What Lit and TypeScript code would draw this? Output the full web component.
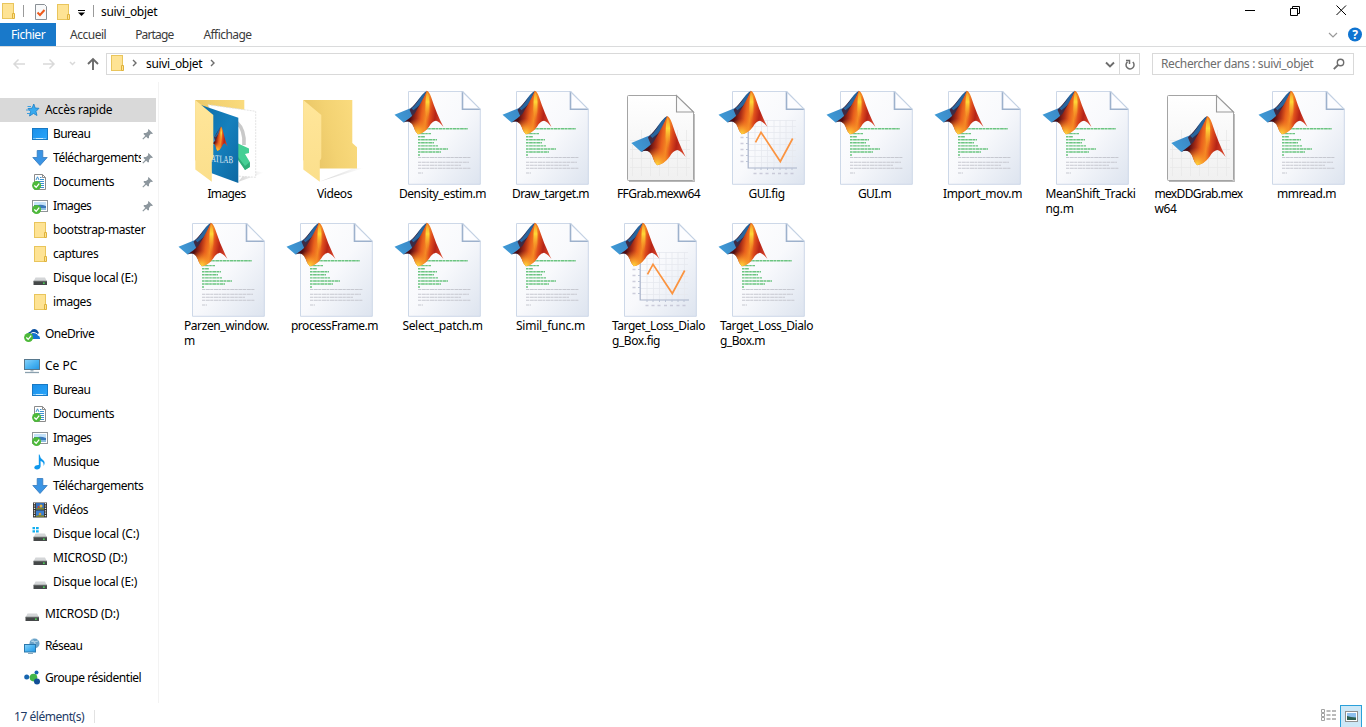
import { LitElement, html, svg, css, nothing } from "lit";
import { customElement, property } from "lit/decorators.js";

/** Single line of text, tracked so that it fills a given width. */
@customElement("fit-label")
export class FitLabel extends LitElement {
  @property() text = "";
  @property({ type: Number }) w = 0;
  static styles = css`
    :host { display: block; white-space: pre; }
    span { display: inline-block; }
  `;
  firstUpdated() {
    const s = this.renderRoot.querySelector("span") as HTMLElement;
    const natural = s.getBoundingClientRect().width;
    if (this.w && natural) s.style.letterSpacing = (this.w + 0.2 - natural) / this.text.length + "px";
  }
  render() {
    return html`<span>${this.text}</span>`;
  }
}

const gradients = html`<svg class="defs" width="0" height="0"><defs>
  <linearGradient id="face" x1="8" y1="20" x2="48" y2="26" gradientUnits="userSpaceOnUse">
    <stop offset="0" stop-color="#3a1020"/><stop offset=".22" stop-color="#4e0d12"/><stop offset=".36" stop-color="#a82c16"/>
    <stop offset=".48" stop-color="#e85f1c"/><stop offset=".6" stop-color="#f58a24"/><stop offset=".7" stop-color="#dd4a1c"/>
    <stop offset=".82" stop-color="#b62417"/><stop offset="1" stop-color="#d8452a"/>
  </linearGradient>
  <linearGradient id="wing" x1="0" y1="24" x2="32" y2="4" gradientUnits="userSpaceOnUse">
    <stop offset="0" stop-color="#3f9ad6"/><stop offset=".5" stop-color="#3a86c4"/><stop offset="1" stop-color="#1e4f86"/>
  </linearGradient>
  <radialGradient id="glow" cx="23" cy="43" r="15" gradientUnits="userSpaceOnUse">
    <stop offset="0" stop-color="#ffd83c"/><stop offset=".45" stop-color="#f9982a" stop-opacity=".85"/><stop offset="1" stop-color="#f07a20" stop-opacity="0"/>
  </radialGradient>
  <linearGradient id="ridge" x1="0" y1="1" x2="0" y2="30" gradientUnits="userSpaceOnUse">
    <stop offset="0" stop-color="#f39a2a"/><stop offset=".35" stop-color="#ffd838"/><stop offset="1" stop-color="#f58a24" stop-opacity="0"/>
  </linearGradient>
  <linearGradient id="page" x1="0" y1="0" x2="1" y2="1">
    <stop offset="0" stop-color="#fff"/><stop offset=".5" stop-color="#f8f9fc"/><stop offset="1" stop-color="#dde4ef"/>
  </linearGradient>
  <linearGradient id="pageGray" x1="0" y1="0" x2="0" y2="1">
    <stop offset="0" stop-color="#fff"/><stop offset="1" stop-color="#f0f0f0"/>
  </linearGradient>
  <linearGradient id="foldBack" x1="0" y1="0.6" x2="1" y2="0.3">
    <stop offset="0" stop-color="#e6c263"/><stop offset=".5" stop-color="#f3d272"/><stop offset="1" stop-color="#fadb7e"/>
  </linearGradient>
  <linearGradient id="foldFront" x1="0" y1="0" x2="0" y2="1">
    <stop offset="0" stop-color="#ffe69a"/><stop offset="1" stop-color="#fbdf8c"/>
  </linearGradient>
  <linearGradient id="cover" x1="0" y1="0" x2="1" y2="1">
    <stop offset="0" stop-color="#0b6ea9"/><stop offset=".5" stop-color="#1580bd"/><stop offset="1" stop-color="#0d68a2"/>
  </linearGradient>
  <linearGradient id="blueScreen" x1="0" y1="0" x2="1" y2="1">
    <stop offset="0" stop-color="#1b8fe8"/><stop offset="1" stop-color="#28a5fb"/>
  </linearGradient>
  <linearGradient id="pcScreen" x1="0" y1="0" x2="1" y2="1">
    <stop offset="0" stop-color="#8bd3fa"/><stop offset=".5" stop-color="#4db5f2"/><stop offset="1" stop-color="#2296e4"/>
  </linearGradient>
  <linearGradient id="shade" x1="0" y1="0" x2="1" y2="0">
    <stop offset="0" stop-color="#888" stop-opacity=".35"/><stop offset="1" stop-color="#888" stop-opacity="0"/>
  </linearGradient>
</defs></svg>`;

const membrane = (t: string) => svg`<g transform=${t}>
  <path d="M0 24L13.500 18.400Q18.500 17 22 11.500Q28 2.500 32.300 0L30 18L18 32Q13.500 29.500 9 31.800Z" fill="url(#wing)"/>
  <path d="M15 19Q19 15 24 9L30 4L26 20L18 26Z" fill="#3e1424" opacity=".8"/>
  <path d="M17 17.500Q20 15.500 23 11Q27 5 31 1.200L28 11Q24 16 19 19.500Z" fill="#28659e"/>
  <path d="M32.300 0Q34.500 .500 36.500 6Q42 23 49 36.300Q45 31 41.500 30Q37.500 30.500 34.500 36Q29.500 42.500 23.300 43.500Q20.500 41 19.300 36.500Q18 32.500 14.500 31Q12 30 9 31.800Q15 28 20 23Q28 10 32.300 0Z" fill="url(#face)"/>
  <path d="M32.300 0Q34.500 .500 36.500 6Q42 23 49 36.300Q45 31 41.500 30Q37.500 30.500 34.500 36Q29.500 42.500 23.300 43.500Q20.500 41 19.300 36.500Q18 32.500 14.500 31Q12 30 9 31.800Q15 28 20 23Q28 10 32.300 0Z" fill="url(#glow)"/>
  <path d="M32.500 1Q34.500 3 35 11Q35.500 21 33.500 30Q30 24 31 14Q31 6 32.500 1Z" fill="url(#ridge)"/>
</g>`;

const page = svg`<path d="M14.500 1.500H68L86.300 19.500V94.300H14.500Z" fill="url(#page)" stroke="#cdd8e8"/>
  <path d="M68.500 1.500V19.800H86.500Z" fill="#fdfdff"/>
  <path d="M68.500 1.500V19.300H86.300" fill="none" stroke="#9db1cc" stroke-width="1.600"/>
  <path d="M68.500 1.500L86.300 19.300" stroke="#c3d1e3" stroke-width="1.200"/>`;

const greens: number[][] = [[27, 74, 38.8], [24, 37, 43.6], [24, 31, 46.7], [24, 43, 49.7], [24, 40, 52.7], [24, 44, 55.9], [24, 54, 59], [24, 47, 62], [24, 26, 65]];
const grays: number[][] = [[24, 77, 67.5], [24, 75, 72.3], [24, 67, 75.3], [24, 77, 78.3], [24, 29, 83]];

const scriptIcon = svg`${page}
  ${greens.map(([a, b, y]) => svg`<path d="M${a} ${y}H${b}" stroke="#6cc581" stroke-width="1.400" stroke-dasharray="2.600 .5 3.700 .4"/>`)}
  ${grays.map(([a, b, y]) => svg`<path d="M${a} ${y}H${b}" stroke="#c6c8d0" stroke-width="1.100" stroke-dasharray="3 .6 4.200 .4"/>`)}
  ${membrane("translate(.5 .8)")}`;

const figIcon = svg`${page}
  <path d="M37 34V78M43.500 30V78M49.500 30V78M56 30V78M62 30V78M68 30V78M74.500 30V78M30 30.500H78M30 36.500H78M30 42.500H78M30 48.500H78M30 54.500H78M30 60.500H78M30 66.500H78M30 72.500H78" stroke="#e6e9ef" stroke-width=".8"/>
  <path d="M30.200 38V78H79" fill="none" stroke="#a9b3ca" stroke-width="1.200"/>
  <path d="M28 47.500h2M28 53.500h2M28 59.500h2M28 65.500h2M28 71.500h2M37 78v2M43 78v2M49.500 78v2M55.500 78v2M62 78v2M68 78v2M74 78v2" stroke="#b7bfd2" stroke-width=".9"/>
  <path d="M22.500 47.500h3M22.500 53.500h3M22.500 59.500h3M22.500 65.500h3M22.500 71.500h3M35.500 83.500h3M41.500 83.500h3M47.500 83.500h3M54 83.500h3M60 83.500h3M66.500 83.500h3M72.500 83.500h3" stroke="#c2c2d3" stroke-width="1.700" opacity=".8"/>
  <path d="M37.500 52.300L43 42.300L62.300 71.500L74.700 48.500" fill="none" stroke="#fb9440" stroke-width="1.700"/>
  ${membrane("translate(.5 .8)")}`;

const mexIcon = svg`<path d="M19 91.300H84.300V24" fill="none" stroke="#999" stroke-width="1.200" opacity=".7"/>
  <path d="M18.500 5.500H66.500L83.500 22V89.500Q83.500 90.500 82.500 90.500H18.500Q17.500 90.500 17.500 89.500V6.500Q17.500 5.500 18.500 5.500Z" fill="url(#pageGray)" stroke="#a4a4a4"/>
  <path d="M22.500 55V86M31.500 40V86M40.500 40V86M49.500 40V86M58.500 40V86M67.500 40V86M76.500 40V86M20 50.500H80M20 59.500H80M20 68.500H80M20 77.500H80" stroke="#e9e9e9" stroke-width=".8"/>
  <path d="M66.500 5.500V22H83.500Z" fill="#fbfbfb" stroke="#9a9a9a" stroke-width="1.100"/>
  ${membrane("translate(21.300 26) scale(1.110 1.130)")}`;

const flap = svg`<path d="M17.300 10L35.300 25V67.500Q35.300 69 33.800 70.500V91.800L17.300 79.500Z" fill="url(#foldFront)"/>`;

const folderIcon = svg`<path d="M34 91.500L78 78H68Z" fill="url(#shade)"/>
  <path d="M17.300 10H66.300V53L71 57.200V78.500H25L17.300 70Z" fill="url(#foldBack)"/>${flap}`;

const imagesIcon = svg`<path d="M60 92L86 82.500L70 80Z" fill="url(#shade)"/>
  <path d="M17.300 10H66.300V53L71 57.200V78.500H25L17.300 70Z" fill="url(#foldBack)"/>
  <path d="M30 14.700L77.700 21.300V87.300L58 86Z" fill="#fff" stroke="#dcdcdc" stroke-width=".8" stroke-dasharray="2 1"/>
  <path d="M59 32.500Q67 40 66 55" fill="none" stroke="#c9c9c9" stroke-width="3.600"/>
  <path d="M59 53L71 58.500V63L67 64L71.800 72V77L67 80L60 68Z" fill="#45cf94"/>
  <path d="M71.800 72V77L67 80L60 70V67L67 76Z" fill="#2fae78"/>
  <path d="M23 15L60.300 27.700V93L33.700 83.300Z" fill="url(#cover)"/>
  <path d="M34 48L39 44L42 56L34 54Z" fill="#6fb0b0"/>
  ${membrane("translate(30 36.500) scale(.4 .560)")}
  <text x="27" y="72" font-size="10.500" font-family="Liberation Serif" fill="#e4f0f7" textLength="28" lengthAdjust="spacingAndGlyphs" transform="skewY(4) translate(0 -2.500)">MATLAB</text>
  ${flap}`;

const badge = svg`<circle cx="4.600" cy="11.500" r="4.500" fill="#4db93a"/><path d="M2.300 11.500L4.200 13.300L7.200 9.600" fill="none" stroke="#fff" stroke-width="1.300"/>`;
const drive = svg`<path d="M3.500 7.500H13L15 11.500H1.500Z" fill="#d4d6d8"/><path d="M1.500 11H15V15H1.500Z" fill="#454849"/><path d="M1.500 11H15" stroke="#8c8f91" stroke-width=".8"/><rect x="11" y="12.500" width="1.700" height="1.300" fill="#4df05c"/>`;

const small: Record<string, unknown> = {
  star: svg`<path d="M9.800 2L11.200 6L15 6.300L12 9.400L13 13.500L9.500 11.500L5.500 14L6.600 9.600L4 6.600L8 6.200Z" fill="#38a9ee" stroke="#1b7fc8" stroke-width=".8"/><path d="M3.500 4.500H7M2 8H6M3 11.500H6" stroke="#3b9ee0" stroke-width="1"/>`,
  desktop: svg`<rect x=".5" y="2.500" width="15" height="11" fill="url(#blueScreen)" stroke="#1879c4"/><path d="M1.500 12.500H14.500" stroke="#c9ecff" stroke-dasharray="1 1 8 1 1 1"/>`,
  down: svg`<path d="M5.200 .5H10.800V7.500H15.200L8 15.500L.8 7.500H5.200Z" fill="#3a94e4" stroke="#3278bd" stroke-width=".8"/>`,
  doc: svg`<path d="M2.500 .5H10.500L13.500 3.500V15.500H2.500Z" fill="#fff" stroke="#8b8b8b"/><path d="M10.500 .5V3.500H13.500" fill="none" stroke="#8b8b8b"/><path d="M4 6L5.500 2.800L7 6M8 3.500H9.500M8 5.500H12M4 7.500H12M4 9.500H12M7 11.500H12M8 13.500H12" fill="none" stroke="#3d91cf" stroke-width="1"/>${badge}`,
  image: svg`<rect x=".5" y="2.500" width="15" height="11" fill="#fff" stroke="#8f9498"/><rect x="2" y="4" width="12" height="8" fill="#c4e2f8"/><path d="M2 7H6Q9 6 14 8V10H2Z" fill="#3b79bb"/><path d="M7 12L9 10H14V12Z" fill="#8dbde0"/>${badge}`,
  folder: svg`<rect x="2.500" y=".5" width="11" height="15" fill="#fee394" stroke="#e9c55c"/><path d="M12.500 10.500H14.500V15.500H12.500Z" fill="#ffe390" stroke="#dfb23c"/>`,
  drive,
  cdrive: svg`<path d="M.5 1H3V3.300H.5ZM4 1H6.700V3.300H4ZM.5 4.300H3V6.600H.5ZM4 4.300H6.700V6.600H4Z" fill="#12aef0"/>${drive}`,
  cloud: svg`<path d="M3 11Q2.500 6.500 6.500 5.500Q9 1.500 13 4L15 7L10 11Z" fill="#0b51a0"/><path d="M6 13Q4.800 9.500 8 8.800Q9.500 5.500 12.600 7.800Q13.800 9 13.800 9.500Q16.200 10 16 13Z" fill="#1474d4"/><path d="M5.500 9Q8.500 4.500 13.500 8" fill="none" stroke="#fff" stroke-width="1"/>${badge}`,
  pc: svg`<rect x=".5" y="1.500" width="15" height="10" fill="url(#pcScreen)" stroke="#57788d"/><path d="M6.500 12H9.500V13.500H6.500Z" fill="#a9bac5"/><path d="M1 14.500H15" stroke="#8aa0ae" stroke-width="1.300"/>`,
  music: svg`<path d="M7.500 .5Q8 4 11 6Q14 8.500 11.500 12Q12.300 8 8.600 7V12.500Q8 15.500 5 15.500Q2 15.200 2.300 13Q3.200 10.800 6.800 11V.5Z" fill="#0f98ed"/>`,
  film: svg`<rect x="1" y=".5" width="14" height="15" fill="#35322f"/><path d="M2.500 1V15.500M13.500 1V15.500" stroke="#e8e8e8" stroke-width="1.300" stroke-dasharray="1.200 1.200"/><rect x="4" y="1" width="8" height="6.500" fill="#3470be"/><rect x="4" y="8.500" width="8" height="6.500" fill="#3b7fd0"/><path d="M4 6.500L7 5.500L12 6V7.500H4ZM4 14L7 13L12 13.500V15H4Z" fill="#7c8431"/><circle cx="9" cy="4" r="1.500" fill="#e7b63b"/><circle cx="6.500" cy="5" r="1" fill="#c8452c"/><circle cx="8" cy="12" r="1.300" fill="#d99c34"/>`,
  network: svg`<circle cx="10.500" cy="5.500" r="5" fill="#6ba3c9"/><path d="M7 3Q10 5 14 3M8 1.500Q12 4 11.500 10" fill="none" stroke="#b9d8ea" stroke-width="1"/><rect x=".5" y="6.500" width="11" height="7.500" fill="url(#pcScreen)" stroke="#2b78ac"/><path d="M4 15.500H9" stroke="#8aa9bb"/>`,
  group: svg`<path d="M2.600 7L9 7L13 2.500M9 7L13 12" stroke="#a6bccb" fill="none"/><circle cx="2.700" cy="7" r="2.500" fill="#1765b0"/><circle cx="12.500" cy="2.600" r="2" fill="#1765b0"/><circle cx="9.500" cy="7.600" r="3.800" fill="#43b649"/><circle cx="13" cy="11.500" r="3" fill="#124f96"/>`,
};

interface Row { i: string; t: string; w: number; d?: number; pin?: boolean; sel?: boolean; gap?: boolean; clip?: boolean }
const rows: Row[] = [
  { i: "star", t: "Accès rapide", w: 67, sel: true },
  { i: "desktop", t: "Bureau", w: 37, d: 1, pin: true },
  { i: "down", t: "Téléchargements", w: 90, d: 1, pin: true, clip: true },
  { i: "doc", t: "Documents", w: 61, d: 1, pin: true },
  { i: "image", t: "Images", w: 38, d: 1, pin: true },
  { i: "folder", t: "bootstrap-master", w: 92, d: 1 },
  { i: "folder", t: "captures", w: 45, d: 1 },
  { i: "drive", t: "Disque local (E:)", w: 84, d: 1 },
  { i: "folder", t: "images", w: 38, d: 1 },
  { i: "cloud", t: "OneDrive", w: 49, gap: true },
  { i: "pc", t: "Ce PC", w: 32, gap: true },
  { i: "desktop", t: "Bureau", w: 37, d: 1 },
  { i: "doc", t: "Documents", w: 61, d: 1 },
  { i: "image", t: "Images", w: 38, d: 1 },
  { i: "music", t: "Musique", w: 46, d: 1 },
  { i: "down", t: "Téléchargements", w: 90, d: 1 },
  { i: "film", t: "Vidéos", w: 35, d: 1 },
  { i: "cdrive", t: "Disque local (C:)", w: 86, d: 1 },
  { i: "drive", t: "MICROSD (D:)", w: 74, d: 1 },
  { i: "drive", t: "Disque local (E:)", w: 84, d: 1 },
  { i: "drive", t: "MICROSD (D:)", w: 74, gap: true },
  { i: "network", t: "Réseau", w: 37, gap: true },
  { i: "group", t: "Groupe résidentiel", w: 96, gap: true },
];

type Line = [string, number];
const files: { k: unknown; l: Line[] }[] = [
  { k: imagesIcon, l: [["Images", 38]] },
  { k: folderIcon, l: [["Videos", 35]] },
  { k: scriptIcon, l: [["Density_estim.m", 87]] },
  { k: scriptIcon, l: [["Draw_target.m", 77]] },
  { k: mexIcon, l: [["FFGrab.mexw64", 83]] },
  { k: figIcon, l: [["GUI.fig", 36]] },
  { k: scriptIcon, l: [["GUI.m", 33]] },
  { k: scriptIcon, l: [["Import_mov.m", 79]] },
  { k: scriptIcon, l: [["MeanShift_Tracki", 90], ["ng.m", 28]] },
  { k: mexIcon, l: [["mexDDGrab.mex", 88], ["w64", 22]] },
  { k: scriptIcon, l: [["mmread.m", 59]] },
  { k: scriptIcon, l: [["Parzen_window.", 85], ["m", 11]] },
  { k: scriptIcon, l: [["processFrame.m", 87]] },
  { k: scriptIcon, l: [["Select_patch.m", 80]] },
  { k: scriptIcon, l: [["Simil_func.m", 69]] },
  { k: figIcon, l: [["Target_Loss_Dialo", 93], ["g_Box.fig", 48]] },
  { k: scriptIcon, l: [["Target_Loss_Dialo", 93], ["g_Box.m", 45]] },
];

const label = (t: string, w: number) => html`<fit-label .text=${t} .w=${w}></fit-label>`;
const ico = (n: string) => html`<svg class="i16" viewBox="0 0 16 16">${small[n]}</svg>`;

@customElement("app-root")
export class AppRoot extends LitElement {
  static styles = css`
    :host { display: flex; flex-direction: column; width: 1366px; height: 727px; overflow: hidden; background: #fff; color: #000; font: 12px/15px "Noto Sans", "Open Sans", sans-serif; }
    * { box-sizing: border-box; }
    svg { display: block; flex: none; }
    .defs { position: absolute; }
    .i16 { width: 16px; height: 16px; }
    .title { display: flex; height: 23px; align-items: center; }
    .title .name { margin-left: 7px; }
    .wins { margin-left: auto; }
    .tabs { display: flex; height: 24px; border-bottom: 1px solid #dadbdc; color: #3b3b3b; align-items: center; }
    .file { background: #1979ca; color: #fff; width: 56px; height: 23px; padding: 4px 0 0 11px; }
    .tab { padding-left: 14px; }
    .tab.b { padding-left: 29px; }
    .tab.c { padding-left: 30px; }
    .right { margin-left: auto; }
    .nav { display: flex; height: 35px; padding-top: 6px; align-items: flex-start; }
    .addr { display: flex; width: 1034px; height: 22px; border: 1px solid #d9d9d9; align-items: center; }
    .addr .crumb { margin-left: 8px; padding-bottom: 2px; }
    .addr .ref { margin-left: auto; }
    .search { display: flex; width: 202px; height: 22px; margin-left: 12px; border: 1px solid #d9d9d9; color: #6d6d6d; align-items: center; padding-left: 8px; }
    .search fit-label { padding-bottom: 1px; }
    .search svg { margin-left: auto; margin-right: 6px; }
    .body { display: flex; height: 621px; }
    .side { width: 159px; border-right: 1px solid #f3f3f3; padding-top: 16px; }
    .row { display: flex; width: 156px; height: 24px; align-items: center; padding-left: 24px; }
    .row.deep { padding-left: 32px; }
    .row.gap { margin-top: 8px; }
    .row.sel { background: #d9d9d9; }
    .row fit-label { margin-left: 5px; padding-bottom: 2px; }
    .row.clip fit-label { width: 88px; overflow: hidden; flex: none; }
    .row .pin { margin-left: auto; margin-right: 2px; }
    .row.clip .pin { margin-left: 1px; margin-right: 0; }
    .grid { display: grid; grid-template-columns: repeat(11, 108px); grid-auto-rows: 132px; padding: 8px 0 0 13px; align-content: start; }
    .tile { display: flex; flex-direction: column; align-items: center; }
    .tile .art { width: 96px; height: 96px; overflow: visible; }
    .tile .cap { padding-left: 1px; }
    .status { display: flex; height: 24px; align-items: center; padding: 2px 0 0 14px; color: #1e3a66; }
    .status .sep { width: 1px; height: 13px; background: #e2e2e2; margin-left: 10px; }
    .status .views { margin-left: auto; margin-right: 3px; }
  `;

  row(r: Row) {
    return html`<div class="row ${r.d ? "deep" : ""} ${r.sel ? "sel" : ""} ${r.gap ? "gap" : ""} ${r.clip ? "clip" : ""}">
      ${ico(r.i)}${label(r.t, r.w)}
      ${r.pin ? html`<svg class="pin" width="12" height="12" viewBox="0 0 12 12"><path d="M6.500 1L11 5.500L9.800 6L8.800 5.800L7 8L7 10L6 10.500L1.500 6L2 5L4 5L6.200 3.200L6 2Z" fill="#8d979e"/><path d="M4 8L.8 11.200" stroke="#8d979e" stroke-width="1.200"/></svg>` : nothing}
    </div>`;
  }

  render() {
    return html`${gradients}
      <div class="title">
        <svg width="94" height="23" viewBox="0 0 94 23">
          <g transform="translate(0 3)">${small.folder}</g>
          <path d="M23.500 5V17M93.500 5V17" stroke="#9a9a9a"/>
          <path d="M35.500 4.500H44.500L46.500 6.500V19.500H35.500Z" fill="#f8f9fa" stroke="#8a9096"/><path d="M37.500 12.500L40 15L44.500 10" fill="none" stroke="#ee5a1c" stroke-width="2"/>
          <g transform="translate(55 4)">${small.folder}</g>
          <path d="M78 10.500H85" stroke="#000"/><path d="M78 12.500H85L81.500 16Z"/>
        </svg>
        <div class="name">${label("suivi_objet", 56)}</div>
        <svg class="wins" width="126" height="23" viewBox="0 0 126 23" fill="none" stroke="#000"><path d="M5 10.500H15M50.500 8.500H57.500V15.500H50.500ZM52.500 8V6.500H59.500V13.500H58M96.500 5.500L106 15M106 5.500L96.500 15"/></svg>
      </div>
      <div class="tabs">
        <div class="file">${label("Fichier", 34)}</div>
        <div class="tab">${label("Accueil", 36)}</div>
        <div class="tab b">${label("Partage", 38)}</div>
        <div class="tab c">${label("Affichage", 48)}</div>
        <svg class="right" width="40" height="22" viewBox="0 0 40 22"><path d="M3 9L7 13L11 9" fill="none" stroke="#9a9a9a" stroke-width="1.200"/><circle cx="29" cy="10.500" r="7" fill="#0f74d1"/><text x="29" y="15" text-anchor="middle" font-size="12" font-weight="700" fill="#fff">?</text></svg>
      </div>
      <div class="nav">
        <svg width="106" height="22" viewBox="0 0 106 22" fill="none" stroke="#d9d9d9" stroke-width="1.500">
          <path d="M25 11H14M18.500 6.500L14 11L18.500 15.500M43 11H54M49.500 6.500L54 11L49.500 15.500M70 9L72.500 11.500L75 9"/>
          <path d="M93 17V6M88 11L93 6L98 11" stroke="#6a6a6a" stroke-width="1.900"/>
        </svg>
        <div class="addr">
          <svg width="31" height="20" viewBox="0 0 31 20"><g transform="translate(2 1)">${small.folder}</g><path d="M26 6L29 9L26 12" fill="none" stroke="#6d6d6d" stroke-width="1.400"/></svg>
          <div class="crumb">${label("suivi_objet", 56)}</div>
          <svg width="16" height="20" viewBox="0 0 16 20"><path d="M9 6L12 9L9 12" fill="none" stroke="#6d6d6d" stroke-width="1.400"/></svg>
          <svg class="ref" width="38" height="20" viewBox="0 0 38 20" fill="none" stroke="#6d6d6d"><path d="M18.500 0V20" stroke="#d9d9d9"/><path d="M5 8.500L9 12.500L13 8.500" stroke-width="1.900"/><path d="M26.500 7.800A4 4 0 1 0 31.800 8M25 6.500H28.500V10" stroke-width="1.500"/></svg>
        </div>
        <div class="search">${label("Rechercher dans : suivi_objet", 152)}
          <svg width="16" height="16" viewBox="0 0 16 16" fill="none" stroke="#6d6d6d"><circle cx="9.500" cy="6.500" r="3.200" stroke-width="1.400"/><path d="M7 9L2.800 13.200" stroke-width="1.800"/></svg>
        </div>
      </div>
      <div class="body">
        <div class="side">${rows.map((r) => this.row(r))}</div>
        <div class="grid">${files.map((f) => html`<div class="tile"><svg class="art" viewBox="0 0 96 96">${f.k}</svg><div class="cap">${f.l.map(([t, w]) => label(t, w))}</div></div>`)}</div>
      </div>
      <div class="status">${label("17 élément(s)", 70)}<div class="sep"></div>
        <svg class="views" width="44" height="22" viewBox="0 0 44 22">
          <g fill="none" stroke="#a3a3a3"><path d="M2.500 4.500H5.500V7.500H2.500ZM2.500 8.500H5.500V11.500H2.500ZM2.500 12.500H5.500V15.500H2.500Z"/></g>
          <path d="M7.500 6H11.500M13 6H17M7.500 10H11.500M13 10H17M7.500 14H11.500M13 14H17" stroke="#777"/>
          <rect x="21.500" y=".5" width="21" height="23" fill="#cde8f7" stroke="#2aa0da"/>
          <rect x="26.500" y="6.500" width="12" height="10" fill="#fff" stroke="#8f8f8f"/><rect x="28" y="8" width="9" height="7" fill="#8dc0ee"/><path d="M28 11L32 12L37 12.500V15H28Z" fill="#2d6050"/>
        </svg>
      </div>`;
  }
}
